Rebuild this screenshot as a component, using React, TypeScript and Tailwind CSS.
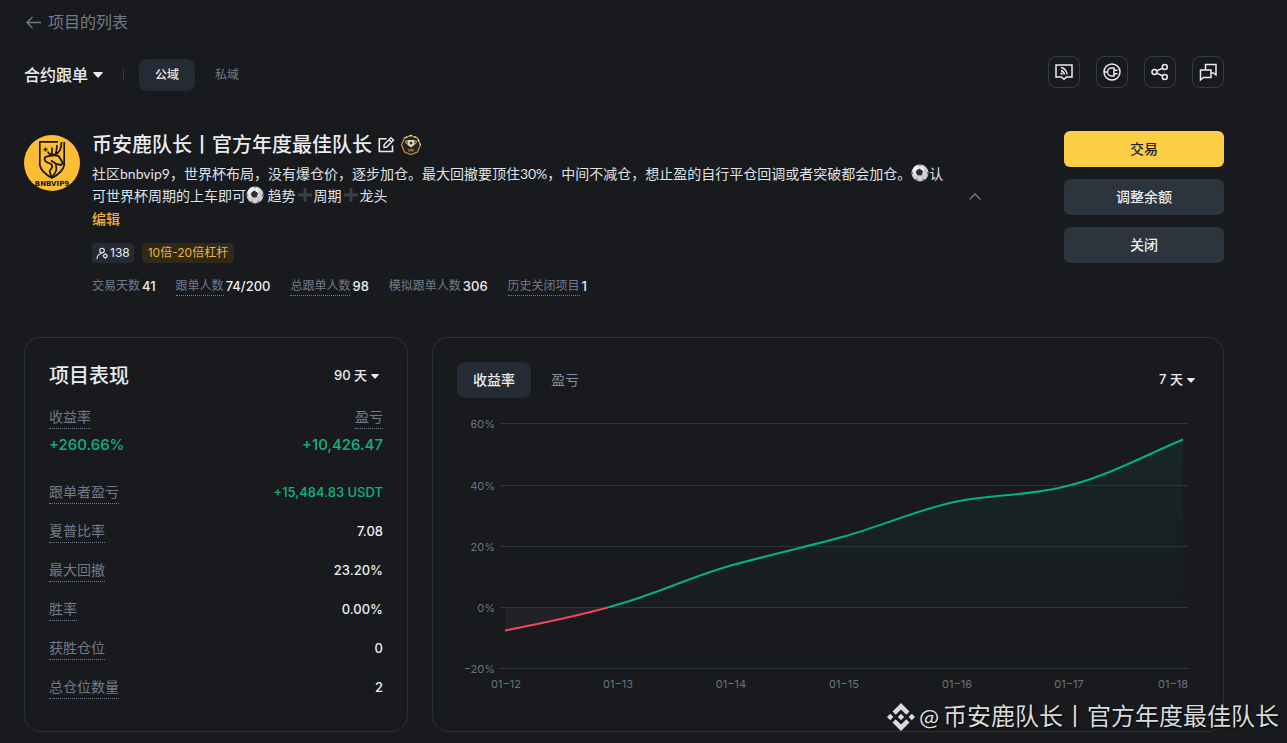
import type { ReactNode } from 'react'

const FONT: React.CSSProperties = { fontFamily: 'Inter, "Noto Sans CJK SC", sans-serif' }
const BODY_FONT: React.CSSProperties = { fontFamily: 'Lato, "Noto Sans CJK SC", sans-serif' }

const stats = [
  { label: '交易天数', value: '41', hint: false },
  { label: '跟单人数', value: '74/200', hint: true },
  { label: '总跟单人数', value: '98', hint: true },
  { label: '模拟跟单人数', value: '306', hint: false },
  { label: '历史关闭项目', value: '1', hint: true },
]

const rows = [
  { label: '跟单者盈亏', value: '+15,484.83 USDT', up: true },
  { label: '夏普比率', value: '7.08', up: false },
  { label: '最大回撤', value: '23.20%', up: false },
  { label: '胜率', value: '0.00%', up: false },
  { label: '获胜仓位', value: '0', up: false },
  { label: '总仓位数量', value: '2', up: false },
]

const yTicks = [
  { label: '60%', y: 14 },
  { label: '40%', y: 76 },
  { label: '20%', y: 137 },
  { label: '0%', y: 198 },
  { label: '−20%', y: 259 },
]

const xTicks = [
  { label: '01−12', x: 49 },
  { label: '01−13', x: 161 },
  { label: '01−14', x: 274 },
  { label: '01−15', x: 387 },
  { label: '01−16', x: 500 },
  { label: '01−17', x: 612 },
  { label: '01−18', x: 716 },
]

const CURVE =
  'M48 220.5C86 213 123 206 161 194.500C199 184 236 166 274 155.500C312 145 349 137 387 126.500C425 116 462 99 500 91.500C538 84 574 86 612 75.500C650 66 687 46 726 29.500'

function Caret({ className }: { className: string }) {
  return (
    <svg viewBox="0 0 10 6" className={className} fill="currentColor" aria-hidden="true">
      <path d="M0.6 0H9.4Q10 0.3 9.6 1L5.5 5.6Q5 6 4.5 5.6L0.4 1Q0 0.3 0.6 0Z" />
    </svg>
  )
}

function IconButton({ label, children }: { label: string; children: ReactNode }) {
  return (
    <button aria-label={label} className="flex size-8 items-center justify-center rounded-lg border border-[#333b47] text-[#eaecef]">
      <svg width="20" height="20" viewBox="0 0 20 20" fill="none" stroke="currentColor" strokeWidth="1.5">
        {children}
      </svg>
    </button>
  )
}

function Ball() {
  return (
    <svg viewBox="0 0 18 18" className="inline-block size-[18px] align-[-3px]" role="img" aria-label="足球">
      <circle cx="9" cy="9" r="8.5" fill="#cfd0d2" />
      <circle cx="7.5" cy="6.5" r="5.5" fill="#f1f1f1" />
      <path d="M8.3 5L11.5 7.2L10.4 11H6.400L5.100 7.300Z" fill="#2b3038" stroke="#2b3038" strokeLinejoin="round" />
      <path d="M7 0.8L11 0.7L9 2ZM0.8 7L2 9.3L1 11.3ZM17.2 7L15.8 9L17 11.5ZM4 15.6L5.8 14.6L7.6 17.2ZM13.9 15.8L12.3 14.6L10.5 17.2Z" fill="#6a6f77" />
      <path d="M8.8 5.2V2M12 7.4L15.6 6.4M10.9 11.2L12.6 14.2M6.9 11.2L5.6 14.2M5.6 7.5L2.2 9.3" stroke="#b9bbbf" strokeWidth="0.6" />
    </svg>
  )
}

function Plus() {
  return (
    <svg viewBox="0 0 18 18" className="inline-block size-[18px] align-[-3px]" role="img" aria-label="加">
      <path d="M7.6 2H10.4V7.6H16V10.4H10.4V16H7.6V10.4H2V7.6H7.6Z" fill="#3b4048" />
    </svg>
  )
}

function Avatar() {
  return (
    <svg viewBox="0 0 56 56" className="size-14 shrink-0" role="img" aria-label="BNBVIP9">
      <circle cx="28" cy="28" r="28" fill="#fdbe35" />
      <g fill="none" stroke="#15171a" strokeLinejoin="round">
        <path d="M34 6.800H15.800V30Q17 37 28 43Q39 37 40.200 30V7" strokeWidth="1.700" />
        <path d="M19.500 14.500H23.500M21.500 12.500V16.500" strokeWidth="1.400" />
        <path d="M30 19.500C25 19.500 24 18 24 16.500M28 19V12.500M31 19.500C33 17 32.500 14 33 10M31 19.500C36.500 17.500 37.500 12 37.500 7" strokeWidth="1.700" />
        <path d="M20.500 23C22 20.500 26 21.300 30 20L34.500 21L39 28L37 30L32 28.800L27 25.500" strokeWidth="1.900" />
        <path d="M20.500 23C20 26.500 22.500 27.500 26 28.500C29.500 30 28.500 33 25.500 36L27.500 42M32 28.800C31.500 32 34 34 31 38L28 42" strokeWidth="1.700" />
      </g>
      <text x="28" y="51" textAnchor="middle" fontSize="7" fontWeight="800" fill="#15171a" textRendering="geometricPrecision" fontFamily="DejaVu Sans">BNBVIP9</text>
    </svg>
  )
}

function Chart() {
  return (
    <svg viewBox="0 0 742 290" className="block w-full" role="img" aria-label="收益率">
      <defs>
        <linearGradient id="gain" x1="0" y1="29" x2="0" y2="198" gradientUnits="userSpaceOnUse">
          <stop offset="0" stopColor="#0ecb81" stopOpacity="0.07" />
          <stop offset="1" stopColor="#0ecb81" stopOpacity="0.01" />
        </linearGradient>
        <clipPath id="above"><rect x="0" y="0" width="742" height="198" /></clipPath>
        <clipPath id="below"><rect x="0" y="198" width="742" height="92" /></clipPath>
        <pattern id="dots" width="2" height="2" patternUnits="userSpaceOnUse">
          <rect width="1" height="1" fill="#382820" />
          <rect x="1" y="1" width="1" height="1" fill="#2f261c" />
        </pattern>
      </defs>
      {yTicks.map(t => (
        <g key={t.label}>
          <path d={`M42 ${t.y - 0.5}H732`} stroke="#2b323b" />
          <text x="38" y={t.y + 4} textAnchor="end" fontSize="11" fill="#6b737f">{t.label}</text>
        </g>
      ))}
      {xTicks.map(t => (
        <text key={t.label} x={t.x} y="278" textAnchor="middle" fontSize="11" fill="#6b737f">{t.label}</text>
      ))}
      <path d={`${CURVE}V198H48Z`} fill="url(#gain)" clipPath="url(#above)" />
      <path d={`${CURVE}V198H48Z`} fill="url(#dots)" clipPath="url(#below)" />
      <path d={CURVE} fill="none" stroke="#05b27c" strokeWidth="2" clipPath="url(#above)" />
      <path d={CURVE} fill="none" stroke="#f6465d" strokeWidth="2" clipPath="url(#below)" />
    </svg>
  )
}

export default function App() {
  return (
    <div className="relative min-h-screen bg-[#181a1e] pt-2.5 pr-[63px] pb-[11px] pl-6 text-[#eaecef]" style={FONT}>
      <a href="#" className="inline-flex h-6 items-center gap-1.5 align-top text-base text-[#707a8a]">
        <svg width="18" height="18" viewBox="0 0 18 18" fill="none" stroke="currentColor" strokeWidth="1.4">
          <path d="M17 9.500H3M8.500 4L3 9.500L8.500 15" />
        </svg>
        项目的列表
      </a>

      <div className="mt-[22px] flex items-start justify-between">
        <div className="mt-[3px] flex h-8 items-center">
          <label className="flex items-center gap-[5px]">
            <select aria-label="跟单类型" className="field-sizing-content appearance-none bg-transparent text-base font-medium">
              <option>合约跟单</option>
            </select>
            <Caret className="h-1.5 w-2.5" />
          </label>
          <span className="mr-[15px] ml-5 h-3 w-px bg-[#333b47]" />
          <div className="flex gap-1 text-xs">
            <button className="h-8 rounded-lg bg-[#252b35] px-4 font-medium">公域</button>
            <button className="h-8 px-4 text-[#707a8a]">私域</button>
          </div>
        </div>
        <div className="flex gap-4">
          <IconButton label="订阅">
            <path d="M2 3H18V15H12.500L10 17.300L7.500 15H2Z" />
            <path d="M7 5.500C10.500 6 12.500 8.500 13.200 12.500M7 8.500C9 9 10 10.300 10.500 12.500" strokeWidth="1.300" />
            <circle cx="7.600" cy="11.700" r="1.100" fill="currentColor" stroke="none" />
          </IconButton>
          <IconButton label="接口">
            <circle cx="10" cy="10" r="8" />
            <path d="M12 6H9.500A4 4 0 0 0 9.500 14H12ZM2 10H5.500M12 8.200H15.500M12 11.800H15.500" />
          </IconButton>
          <IconButton label="分享">
            <circle cx="4.500" cy="10" r="2.500" />
            <circle cx="14.800" cy="5" r="2.500" />
            <circle cx="14.800" cy="15" r="2.500" />
            <path d="M6.800 8.900L12.500 6.200M6.800 11.100L12.500 13.800" />
          </IconButton>
          <IconButton label="聊天">
            <path d="M7.500 8V2.500H18V13L15.500 11H13" />
            <path d="M2.500 8H13V15.500H5.500L2.500 18Z" />
          </IconButton>
        </div>
      </div>

      <section className="mt-10 flex">
        <div className="mr-3 pt-1"><Avatar /></div>
        <div className="min-w-0 flex-1">
          <div className="flex h-7 items-center">
            <h1 className="text-xl font-medium">币安鹿队长丨官方年度最佳队长</h1>
            <button aria-label="编辑名称" className="ml-1">
              <svg width="20" height="20" viewBox="0 0 20 20" fill="none" stroke="currentColor" strokeWidth="1.600">
                <path d="M10.500 3.800H3.300V16.500H16.500V10.500" />
                <path d="M8 12.300V9.800L15 2.800L17.500 5.300L10.500 12.300ZM13 4.800L15.500 7.300" strokeWidth="1.400" />
              </svg>
            </button>
            <svg width="22" height="22" viewBox="0 0 22 22" className="ml-1" role="img" aria-label="奖杯">
              <path d="M11 1.500L17.500 4L20.500 11L17.500 18L11 20.500L4.500 18L1.500 11L4.500 4Z" fill="#20242b" stroke="#b98a35" strokeWidth="1.300" />
              <path d="M4.500 4L11 1.500L17.500 4L20.500 11" fill="none" stroke="#ead6a8" strokeWidth="1.300" strokeDasharray="3 2" />
              <path d="M7.500 6H14.500V9.500Q14 12.500 11 13Q8 12.500 7.500 9.500Z" fill="#e9d9b5" />
              <path d="M7.500 7H5.500Q5.500 10 8 10.500M14.500 7H16.500Q16.500 10 14 10.500" fill="none" stroke="#dfb050" />
              <circle cx="11" cy="9" r="1.500" fill="#30343c" />
              <path d="M8 15H14V17.500H8ZM10.500 13H11.500V15H10.500Z" fill="#8a6224" />
            </svg>
          </div>
          <div className="mt-1 flex items-end">
            <p className="text-sm leading-[22px] text-[#dfe2e6]" style={BODY_FONT}>
              社区bnbvip9，世界杯布局，没有爆仓价，逐步加仓。最大回撤要顶住30%，中间不减仓，想止盈的自行平仓回调或者突破都会加仓。<Ball />认
              <br />
              可世界杯周期的上车即可<Ball /> 趋势<Plus />周期<Plus />龙头
            </p>
            <button aria-label="收起" className="mb-0.5 ml-6 text-[#707a8a]">
              <svg width="16" height="16" viewBox="0 0 16 16" fill="none" stroke="currentColor" strokeWidth="1.400">
                <path d="M2.500 10.500L8 5L13.500 10.500" />
              </svg>
            </button>
          </div>
          <a href="#" className="block h-6 w-fit text-sm leading-6 font-medium text-[#f0b232]">编辑</a>
          <div className="mt-3 flex gap-2 text-xs leading-5">
            <span className="flex items-center gap-px rounded bg-[#252b35] px-1">
              <svg width="13" height="13" viewBox="0 0 13 13" fill="none" stroke="currentColor" strokeWidth="1.100">
                <circle cx="6" cy="3.600" r="2.300" />
                <path d="M1 12C1 9 2.500 7 5.500 6.500" />
                <circle cx="9.300" cy="9" r="1.700" />
                <path d="M9.300 6.300V7.300M9.300 10.700V11.700M6.600 9H7.600M11 9H12" />
              </svg>
              138
            </span>
            <span className="rounded bg-[#302819] px-1.5 text-[#f0b232]">10倍-20倍杠杆</span>
          </div>
          <dl className="mt-3.5 flex gap-5">
            {stats.map(s => (
              <div key={s.label} className="flex items-start gap-0.5 leading-[18px]">
                <dt className={s.hint ? 'border-b border-dotted border-[#707a8a] text-xs leading-[18px] text-[#707a8a]' : 'text-xs leading-[18px] text-[#707a8a]'}>{s.label}</dt>
                <dd className="text-[13px] font-medium">{s.value}</dd>
              </div>
            ))}
          </dl>
        </div>
        <div className="flex w-40 shrink-0 flex-col gap-3 text-sm font-medium">
          <button className="h-9 rounded-md bg-[#fdce46] text-[#202630]">交易</button>
          <button className="h-9 rounded-md bg-[#2c343e]">调整余额</button>
          <button className="h-9 rounded-md bg-[#2c343e]">关闭</button>
        </div>
      </section>

      <div className="mt-[41px] flex gap-6">
        <section className="w-96 shrink-0 rounded-2xl border border-[#2b323b] px-6 pt-6 pb-8">
          <div className="flex h-7 items-center justify-between">
            <h2 className="text-xl font-medium">项目表现</h2>
            <label className="mr-1 flex items-center gap-1">
              <select aria-label="表现周期" className="field-sizing-content appearance-none bg-transparent text-[13px] font-medium">
                <option>90 天</option>
              </select>
              <Caret className="h-[5px] w-2" />
            </label>
          </div>
          <dl className="mt-4 flex justify-between">
            <div>
              <dt className="w-fit border-b border-dotted border-[#707a8a] text-sm leading-[22px] text-[#707a8a]">收益率</dt>
              <dd className="mt-1 text-[15px] leading-6 font-medium text-[#0bb57c]">+260.66%</dd>
            </div>
            <div>
              <dt className="ml-auto w-fit border-b border-dotted border-[#707a8a] text-sm leading-[22px] text-[#707a8a]">盈亏</dt>
              <dd className="mt-1 text-[15px] leading-6 font-medium text-[#0bb57c]">+10,426.47</dd>
            </div>
          </dl>
          <dl className="mt-6 flex flex-col gap-4 text-sm leading-[22px]">
            {rows.map(r => (
              <div key={r.label} className="flex justify-between">
                <dt className="border-b border-dotted border-[#707a8a] text-[#707a8a]">{r.label}</dt>
                <dd className={r.up ? 'text-[13px] font-medium text-[#0bb57c]' : 'text-[13px] font-medium'}>{r.value}</dd>
              </div>
            ))}
          </dl>
        </section>

        <section className="min-w-0 flex-1 rounded-2xl border border-[#2b323b] p-6">
          <div className="flex items-center justify-between">
            <div className="flex gap-1 text-sm">
              <button className="h-9 rounded-lg bg-[#252b35] px-4 font-medium">收益率</button>
              <button className="h-9 px-4 text-[#848e9c]">盈亏</button>
            </div>
            <label className="mr-1 flex items-center gap-1">
              <select aria-label="图表周期" className="field-sizing-content appearance-none bg-transparent text-[13px] font-medium">
                <option>7 天</option>
              </select>
              <Caret className="h-[5px] w-2" />
            </label>
          </div>
          <div className="mt-3"><Chart /></div>
        </section>
      </div>

      {/* Watermark */}
      <div className="pointer-events-none absolute right-2 bottom-2 flex items-center gap-1 text-2xl leading-9 text-[#d9dadc] [text-shadow:1px_1px_2px_#000]">
        <svg width="28" height="28" viewBox="0 0 28 28" fill="currentColor" aria-hidden="true">
          <path d="M14 0L22.500 8.500L19.300 11.700L14 6.400L8.700 11.700L5.500 8.500ZM3.200 10.800L6.400 14L3.200 17.200L0 14ZM14 10.800L17.200 14L14 17.200L10.800 14ZM24.800 10.800L28 14L24.800 17.200L21.600 14ZM5.500 19.500L8.700 16.300L14 21.600L19.300 16.300L22.500 19.500L14 28Z" />
        </svg>
        <span style={BODY_FONT}>@</span>
        <span>币安鹿队长丨官方年度最佳队长</span>
      </div>
    </div>
  )
}
